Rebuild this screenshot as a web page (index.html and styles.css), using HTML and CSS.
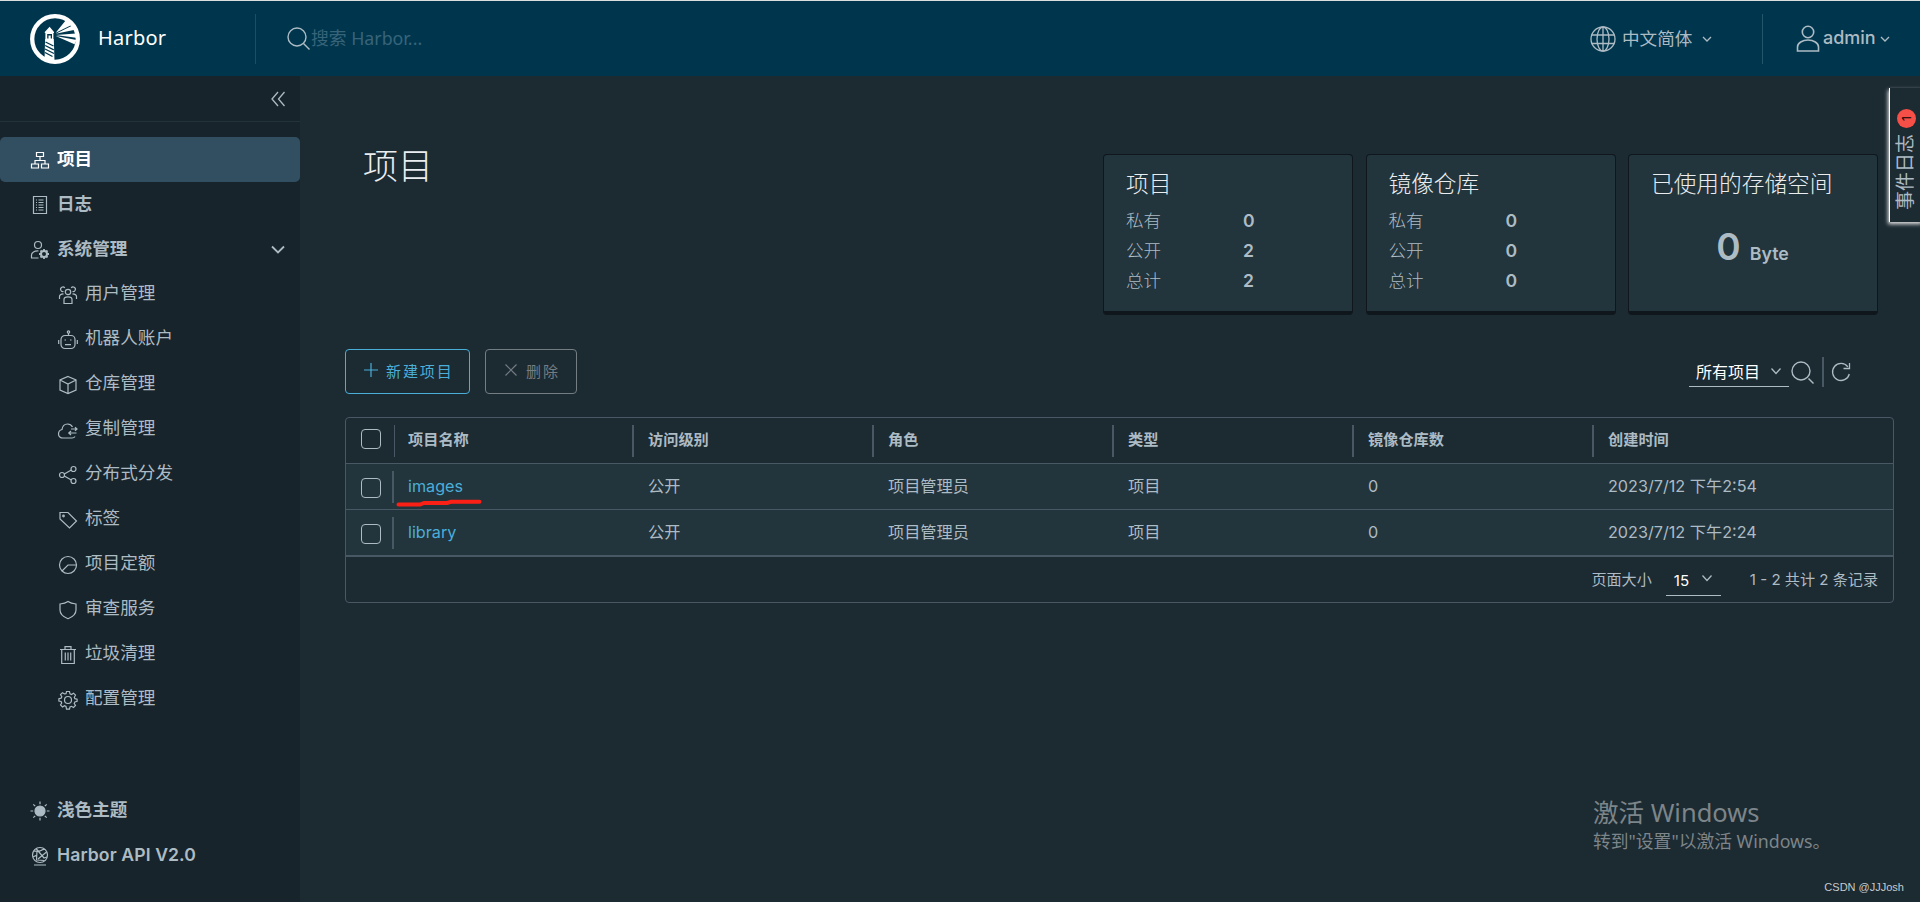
FILE: index.html
```
<!DOCTYPE html>
<html lang="zh-CN">
<head>
<meta charset="utf-8">
<title>Harbor</title>
<link rel="stylesheet" href="styles.css">
</head>
<body>
<div class="app">
  <header class="header">
    <div class="brand">
      <svg class="logo" viewBox="0 0 50 50">
        <circle cx="25" cy="25" r="22.8" fill="none" stroke="#fff" stroke-width="4.300"/>
        <path d="M14.800 18L19.600 12.700 24 18v1h-.6v6h.4L24.500 47h-10l.6-22h.3v-6h-.6z" fill="#fff"/>
        <path d="M17.200 20h4.800v4.600h-1.300v-3h-2.200v3h-1.300z" fill="#00364d"/>
        <path d="M15.500 28l8 4M15.200 31.500l8.600 4.300M15 35l9 4.500M15 38.500l7.500 4" stroke="#00364d" stroke-width="1.300"/>
        <path d="M25.700 18.700L36 6l6.500 4.500zM25.700 19.800L42.500 11.500l2.500 4.200zM25.700 20.900L46 19.500v4.300zM25.700 22.100L46.500 26l-2 4.200z" fill="#fff"/>
      </svg>
      <span class="brand-name">Harbor</span>
    </div>
    <div class="search">
      <svg class="search-icon" viewBox="0 0 24 24"><circle cx="10" cy="10" r="9"/><path d="M16.500 16.500l6 6"/></svg>
      <span class="placeholder">搜索 Harbor...</span>
    </div>
    <div class="language">
      <svg class="globe" viewBox="0 0 26 26"><circle cx="13" cy="13" r="12"/><ellipse cx="13" cy="13" rx="6" ry="12"/><path d="M13 1v24M1.500 9h23M1.500 17.500h23"/></svg>
      <span>中文简体</span>
      <svg class="caret" viewBox="0 0 10 6"><path d="M1 1l4 4 4-4"/></svg>
    </div>
    <div class="account">
      <svg class="person" viewBox="0 0 24 28"><circle cx="12" cy="7" r="5.700"/><path d="M1.500 26v-4c0-4 5-7 10.500-7s10.500 3 10.500 7v4z"/></svg>
      <span class="admin">admin</span>
      <svg class="caret" viewBox="0 0 10 6"><path d="M1 1l4 4 4-4"/></svg>
    </div>
  </header>
  <div class="body">
    <nav class="sidebar">
      <div class="collapse"><svg viewBox="0 0 16 16"><path d="M8 1L2 8l6 7M14.500 1L8.500 8l6 7"/></svg></div>
      <div class="links">
        <a class="link active"><svg viewBox="0 0 20 20"><path d="M6.500 2.500h7v4h-7zM1.500 14h7v4h-7zM11.500 14h7v4h-7zM10 6.500V10M5 14v-3.500h10V14"/></svg><span>项目</span></a>
        <a class="link"><svg viewBox="0 0 20 20"><path d="M3.500 1.500h13v17h-13zM8.500 5h5M8.500 7.500h5M8.500 10h5M8.500 12.500h5M8.500 15h5M6 5h1M6 7.500h1M6 10h1M6 12.500h1M6 15h1"/></svg><span>日志</span></a>
        <a class="link"><svg viewBox="0 0 20 20"><circle cx="8" cy="5" r="3.500"/><path d="M8.500 18h-7v-3c0-2.500 3-4.300 7-4"/><circle cx="14" cy="14" r="3" stroke-width="2"/><path d="M14 9v2M14 17v2M9 14h2M17 14h2M10.500 10.500l1.300 1.300M16.200 16.200l1.300 1.300M10.500 17.500l1.300-1.300M16.200 11.800l1.300-1.300" stroke-width="1.800"/></svg><span>系统管理</span><svg class="expand" viewBox="0 0 16 10"><path d="M2 1.500l6 6 6-6"/></svg></a>
        <a class="link sub"><svg viewBox="0 0 20 20"><circle cx="10" cy="7" r="2.700"/><path d="M6 18.500v-4c0-1.500 1.500-2.700 4-2.700s4 1.200 4 2.700v4zM5.500 6.500A2.300 2.300 0 1 1 6.800 3M14.500 6.500A2.300 2.300 0 1 0 13.200 3M1.500 14v-2.500c0-1.500 1.500-2.500 4-2.700M18.500 14v-2.500c0-1.500-1.500-2.500-4-2.700"/></svg><span>用户管理</span></a>
        <a class="link sub"><svg viewBox="0 0 20 20"><rect x="3" y="5.500" width="14" height="13" rx="4"/><circle cx="10.500" cy="2" r="1.200"/><path d="M10.500 3v2.500M.7 10v4M19.300 10v4M7 14.700h6M6.500 10h1.500M12 10h1.500"/></svg><span>机器人账户</span></a>
        <a class="link sub"><svg viewBox="0 0 20 20"><path d="M10 1.500l8 3.500v10l-8 3.500L2 15V5zM2 5l8 4 8-4M10 9v9.500"/></svg><span>仓库管理</span></a>
        <a class="link sub"><svg viewBox="0 0 20 20"><path d="M17 16.500c-.6 1-1.500 1.500-3 1.500H5c-2.500 0-4.500-1.500-4.500-4S2 10 4 9.500C4.500 6 6.500 4 9.500 4c2.500 0 4 1.200 5 3M13 9h6M17 7.200L19 9l-2 1.800M18.500 13H11M13 11l-2.200 2 2.200 2"/></svg><span>复制管理</span></a>
        <a class="link sub"><svg viewBox="0 0 20 20"><circle cx="4" cy="10" r="2.500"/><circle cx="15.500" cy="4" r="2.500"/><circle cx="15.500" cy="16" r="2.500"/><path d="M6.300 9l7-4M6.300 11l7 4"/></svg><span>分布式分发</span></a>
        <a class="link sub"><svg viewBox="0 0 20 20"><path d="M2 3v6l9.500 9 7-7L10 2.500H2z"/><circle cx="5.500" cy="6" r=".8"/></svg><span>标签</span></a>
        <a class="link sub"><svg viewBox="0 0 20 20"><circle cx="10" cy="10" r="8.500"/><path d="M18.500 10H10l-6 6"/></svg><span>项目定额</span></a>
        <a class="link sub"><svg viewBox="0 0 20 20"><path d="M10 1.500c2 1.500 5 2.300 8 2.500v6c0 4-3.500 7-8 8.700C5.500 17 2 14 2 10V4c3-.2 6-1 8-2.500z"/></svg><span>审查服务</span></a>
        <a class="link sub"><svg viewBox="0 0 20 20"><path d="M2 4.500h16M7 4V1.700h6V4M3.700 4.500v14h12.600v-14M7.300 7.500v8M10 7.500v8M12.700 7.500v8"/></svg><span>垃圾清理</span></a>
        <a class="link sub"><svg viewBox="0 0 20 20"><circle cx="10" cy="10" r="3.500"/><path d="M8.500 1.500h3l.5 2.300 1.500.7 2-1.300 2 2-1.200 2 .6 1.500 2.200.5v2.200l-2.200.6-.7 1.500 1.300 2-2 2-2-1.200-1.500.6-.5 2.200h-3L8 16.400l-1.500-.7-2 1.300-2-2 1.200-2-.6-1.500-2.200-.5V8.700l2.200-.5.700-1.500-1.300-2 2-2 2 1.200L8 3.800z"/></svg><span>配置管理</span></a>
      </div>
      <div class="links foot">
        <a class="link"><svg viewBox="0 0 20 20"><circle cx="10" cy="10" r="5" fill="#adbbc4"/><path d="M10 .5v2.700M10 16.800v2.700M.5 10h2.700M16.800 10h2.700M3.300 3.300l1.900 1.900M14.800 14.800l1.900 1.900M3.300 16.700l1.900-1.900M14.800 5.200l1.900-1.900"/></svg><span>浅色主题</span></a>
        <a class="link"><svg viewBox="0 0 20 20"><circle cx="10" cy="9" r="7.500"/><path d="M4 19h12M3.500 5c3 .3 5 1 7.500-.5s3-1 4-1M6 2.500L14 12l3-1M3 11l4-2M7 5L6.500 14l8 .5M16.500 6L8 13"/></svg><span class="api">Harbor API V2.0</span></a>
      </div>
    </nav>
    <main class="main">
      <section class="summary">
        <h1 class="title">项目</h1>
        <div class="cards">
          <div class="card">
            <h2>项目</h2>
            <dl><dt>私有</dt><dd>0</dd><dt>公开</dt><dd>2</dd><dt>总计</dt><dd>2</dd></dl>
          </div>
          <div class="card">
            <h2>镜像仓库</h2>
            <dl><dt>私有</dt><dd>0</dd><dt>公开</dt><dd>0</dd><dt>总计</dt><dd>0</dd></dl>
          </div>
          <div class="card">
            <h2>已使用的存储空间</h2>
            <div class="storage"><span class="amount">0</span><span class="unit">Byte</span></div>
          </div>
        </div>
      </section>
      <section class="toolbar">
        <button class="btn primary"><svg viewBox="0 0 14 14"><path d="M7 0v14M0 7h14"/></svg><span>新建项目</span></button>
        <button class="btn disabled"><svg viewBox="0 0 14 14"><path d="M1.500 1.500l11 11M12.500 1.500l-11 11"/></svg><span>删除</span></button>
        <div class="filters">
          <div class="select"><span>所有项目</span><svg class="caret" viewBox="0 0 10 6"><path d="M.5.5l4.500 5 4.500-5"/></svg></div>
          <svg class="search-icon" viewBox="0 0 24 24"><circle cx="10" cy="10" r="9"/><path d="M17.500 17.500l5 5"/></svg>
          <i class="bar"></i>
          <svg class="refresh" viewBox="0 0 20 20"><path d="M18.300 12a8.500 8.500 0 1 1-1.500-7.200M18.500 1v5.500h-6"/></svg>
        </div>
      </section>
      <section class="grid">
        <div class="row head">
          <div class="check"><i></i></div><div>项目名称</div><div>访问级别</div><div>角色</div><div>类型</div><div>镜像仓库数</div><div>创建时间</div>
        </div>
        <div class="row">
          <div class="check"><i></i></div><div class="name"><a>images</a><svg class="marker" viewBox="0 0 86 8"><path d="M2.500 5.500H24l4-1.500h23l4-1.200h28.500"/></svg></div><div>公开</div><div>项目管理员</div><div>项目</div><div class="num">0</div><div class="date">2023/7/12 下午2:54</div>
        </div>
        <div class="row">
          <div class="check"><i></i></div><div class="name"><a>library</a></div><div>公开</div><div>项目管理员</div><div>项目</div><div class="num">0</div><div class="date">2023/7/12 下午2:24</div>
        </div>
        <div class="pager">
          <span class="size-label">页面大小</span>
          <div class="size"><span>15</span><svg class="caret" viewBox="0 0 10 6"><path d="M.5.5l4.500 5 4.500-5"/></svg></div>
          <span class="count">1 - 2 共计 2 条记录</span>
        </div>
      </section>
    </main>
  </div>
  <aside class="events"><span>事件日志</span><b>1</b></aside>
  <div class="activate"><p class="big">激活 Windows</p><p>转到"设置"以激活 Windows。</p></div>
  <div class="credit">CSDN @JJJosh</div>
</div>
</body>
</html>
```
FILE: styles.css
```
* { box-sizing: border-box; }
body { margin: 0; background: #1c2a32; color: #adbbc4; font-family: Inter, "Noto Sans CJK SC", sans-serif; }
h1, h2, dl, dd, p { margin: 0; font-weight: 400; }
svg { fill: none; stroke: currentColor; flex: none; overflow: visible; }
.app { position: relative; width: 1920px; height: 902px; display: flex; flex-direction: column; overflow: hidden; }

.header { height: 76px; border-top: 1px solid #dcdfe0; background: #00364d; display: flex; align-items: center; }
.brand { width: 256px; height: 50px; display: flex; align-items: center; padding-left: 30px; border-right: 1px solid #1d4f63; }
.logo { width: 50px; height: 50px; stroke: none; }
.brand-name { margin: 0 0 2px 18px; color: #fff; font: 20px/30px "Noto Sans", sans-serif; letter-spacing: .2px; }
.search { flex: 1; display: flex; align-items: center; padding-left: 31px; }
.search-icon { width: 24px; height: 24px; stroke-width: 1.400; }
.placeholder { padding-bottom: 1px; font: 17.800px/26px "Noto Sans", "Noto Sans CJK SC", sans-serif; color: #38647a; }
.language { width: 173px; height: 50px; display: flex; align-items: center; font-size: 17.600px; border-right: 1px solid #23566b; }
.language span { padding-bottom: 3px; }
.globe { width: 26px; height: 26px; margin-right: 6px; stroke-width: 1.300; }
.caret { width: 10px; height: 6px; stroke-width: 1.300; }
.language .caret { margin-left: 10px; }
.account { width: 157px; display: flex; align-items: center; padding-left: 33px; }
.person { width: 24px; height: 28px; stroke-width: 1.600; }
.admin { margin: 0 4px 3px 3px; font-size: 18px; font-weight: 500; }
.account .caret { margin-top: 1px; }

.body { flex: 1; display: flex; min-height: 0; }
.sidebar { width: 300px; background: #17242b; display: flex; flex-direction: column; }
.collapse { height: 46px; border-bottom: 1px solid #22323a; display: flex; justify-content: flex-end; align-items: center; padding-right: 14px; }
.collapse svg { width: 16px; height: 16px; stroke-width: 1.300; }
.links { padding-top: 15px; }
.link { height: 45px; display: flex; align-items: center; padding-left: 30px; font-size: 17.600px; font-weight: 700; }
.link svg { width: 20px; height: 20px; margin-right: 7px; stroke-width: 1.200; }
.link span { line-height: 26px; padding-bottom: 2px; }
.link.active { background: #324f62; color: #fff; border-radius: 5px; }
.link.sub { padding-left: 58px; font-weight: 400; }
.link.sub svg { margin-right: 7px; margin-top: 1px; }
.link.sub span { padding-bottom: 3px; }
.link .expand { width: 16px; height: 10px; margin: 0 14px 0 auto; stroke-width: 1.800; }
.foot { margin-top: auto; padding: 0 0 24px; }
.link .api { font-weight: 600; letter-spacing: .1px; }

.main { flex: 1; padding: 78px 26px 0 45px; }
.summary { display: flex; justify-content: space-between; padding: 0 16px 0 18px; }
.title { font-size: 35px; line-height: 48px; margin-top: -12px; color: #eaedf0; font-weight: 300; }
.cards { display: flex; gap: 12.500px; }
.card { width: 250px; height: 161px; padding: 12px 22px; background: #22343c; border: 1px solid #0f171c; border-bottom-width: 4px; border-radius: 4px; }
.card h2 { font-size: 22.700px; line-height: 34px; color: #eaedf0; font-weight: 300; white-space: nowrap; }
.card dl { display: grid; grid-template-columns: 117px 1fr; grid-auto-rows: 30px; align-items: center; font-size: 17.600px; line-height: 30px; margin-top: 5px; }
.card dt { font-weight: 300; }
.card dd { font-weight: 600; }
.storage { display: flex; align-items: baseline; justify-content: center; gap: 9px; margin-top: 24px; line-height: 44px; padding-right: 1px; }
.amount { font-size: 37px; font-weight: 600; }
.unit { font-size: 17.800px; font-weight: 600; }

.toolbar { display: flex; align-items: center; margin-top: 34px; height: 45px; }
.btn { height: 45px; display: flex; align-items: center; padding: 0 0 2px; background: none; border: 1px solid; border-radius: 4px; font: 15px/24px "Noto Sans CJK SC", sans-serif; letter-spacing: 1.900px; }
.btn svg { width: 14px; height: 14px; stroke-width: 1.200; margin: 0 8px 1px 18px; }
.primary { width: 125px; color: #4aaed9; }
.disabled { width: 92px; margin-left: 15px; color: #747d82; }
.filters { margin-left: auto; display: flex; align-items: center; padding-right: 43px; }
.select { width: 100px; height: 31px; border-bottom: 1px solid #adbbc4; display: flex; align-items: center; justify-content: space-between; padding: 0 8px 0 7px; color: #fff; font-size: 16px; }
.select .caret { color: #adbbc4; }
.filters .search-icon { margin: 3px 7px 0 2px; }
.bar { width: 2px; height: 30px; background: #495865; margin-right: 7px; }
.refresh { width: 20px; height: 20px; stroke-width: 1.300; }

.grid { margin-top: 23px; height: 186px; border: 1px solid #495865; border-radius: 4px; }
.row { height: 46px; display: grid; grid-template-columns: 48px 240px 240px 240px 240px 240px 1fr; align-items: center; background: #22343c; border-bottom: 1px solid #495865; font-size: 16.200px; }
.row > div { height: 32px; line-height: 30px; padding-left: 14px; }
.row > .check { padding: 7px 0 0 15px; border-right: 2px solid #495865; }
.row > .name { position: relative; }
.row:nth-child(3) { height: 47px; border-bottom-width: 2px; }
.row.head { background: none; font-size: 15.200px; font-weight: 600; }
.row.head > div { border-right: 2px solid #495865; line-height: 29px; }
.row.head > .check { width: 49px; border-right-width: 1px; padding-top: 4px; }
.row.head > div:last-child { border: 0; }
.check i { display: block; width: 20px; height: 20px; border: 1px solid #adbbc4; border-radius: 4px; }
.name a { color: #4aaed9; }
.marker { position: absolute; left: 2px; top: 28px; width: 86px; height: 8px; stroke: #fb2015; stroke-width: 4; stroke-linecap: round; }
.pager { height: 45px; display: flex; align-items: center; justify-content: flex-end; padding: 0 15px 0 0; font-size: 15.100px; }
.size-label, .count { padding-bottom: 4px; }
.size { width: 55px; height: 30px; margin: 2px 29px 0 14px; padding: 0 9px 0 8px; border-bottom: 1px solid #adbbc4; display: flex; align-items: center; justify-content: space-between; color: #fff; }
.size .caret { color: #adbbc4; margin-bottom: 4px; }

.events { position: absolute; left: 1889px; top: 88px; width: 34px; height: 134px; display: flex; align-items: center; writing-mode: vertical-rl; text-orientation: sideways; transform: rotate(180deg); padding: 12px 0; background: #1c2a32; border-right: 1px solid #fff; box-shadow: 1px -2px 4px #e8e8e8; font-size: 19px; }
.events span { line-height: 34px; padding-left: 2px; }
.events b { width: 19px; height: 19px; border-radius: 50%; background: #f54f47; color: #000; font: 12px/19px Inter, sans-serif; text-align: center; margin: 6px 0 0; }
.activate { position: absolute; left: 1593px; top: 796px; color: #7c8589; font: 17.800px/25px "Noto Sans", "Noto Sans CJK SC", sans-serif; white-space: nowrap; }
.activate .big { font-size: 25.500px; line-height: 33px; }
.credit { position: absolute; right: 16px; top: 879px; font: 11px/16px "Liberation Sans", sans-serif; color: #c5cacc; }
```
